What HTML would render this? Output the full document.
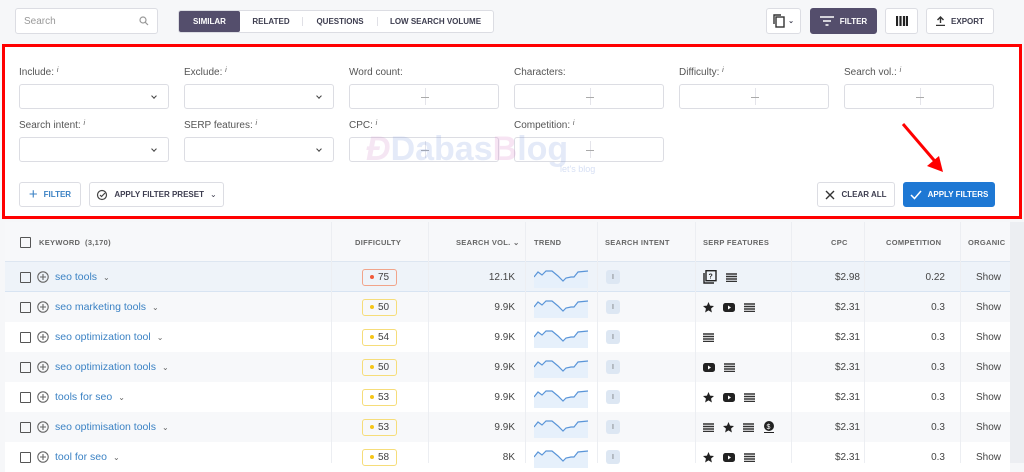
<!DOCTYPE html>
<html><head><style>
*{box-sizing:border-box;margin:0;padding:0}
body{width:1024px;height:463px;overflow:hidden;background:#f6f7f9;font-family:"Liberation Sans",sans-serif;position:relative;color:#333}
.a{position:absolute}
.btn{position:absolute;border:1px solid #dcdde3;border-radius:3px;background:#fff;font-size:8px;font-weight:bold;color:#3d3d4f;display:flex;align-items:center;justify-content:center;gap:6px}
.lbl{position:absolute;font-size:10px;color:#555}
.lbl i{font-size:7px;vertical-align:top}
.inp{position:absolute;width:150px;height:25px;border:1px solid #dcdde3;border-radius:3px;background:#fff}
.sel:after{content:"";position:absolute;right:12px;top:9px;width:3px;height:3px;border-right:1.2px solid #444;border-bottom:1.2px solid #444;transform:rotate(45deg)}
.rng:before{content:"";position:absolute;left:75px;top:3px;height:17px;border-left:1px solid #e4e4ea}
.rng:after{content:"";position:absolute;left:71px;top:12px;width:8px;border-top:1px solid #aaa}
.row{position:absolute;left:5px;width:1005px;height:30px;font-size:10px}
.c{position:absolute;top:0;height:30px;display:flex;align-items:center}
.cb{width:11px;height:11px;border:1.5px solid #555;border-radius:1px}
.kw{color:#3b82c4;font-size:10.5px}
.dif{width:35px;height:17px;border:1px solid #f6dd7a;border-radius:3px;font-size:10px;color:#444;display:flex;align-items:center;justify-content:center;gap:4px}
.dif b{width:4px;height:4px;border-radius:50%;background:#f5c518}
.it{width:14px;height:14px;background:#dde7f3;border-radius:3px;font-size:7px;color:#666;display:flex;align-items:center;justify-content:center}
.hd{position:absolute;top:0;height:40px;display:flex;align-items:center;font-size:7.5px;font-weight:bold;color:#666;letter-spacing:.3px}
.vl{position:absolute;top:222px;height:241px;border-left:1px solid #eceef2}
</style></head><body>
<div class="btn" style="left:15px;top:8px;width:143px;height:26px;justify-content:space-between;padding:0 8px;font-weight:normal;font-size:10px;color:#999">Search<svg width="10" height="10" viewBox="0 0 10 10"><circle cx="4" cy="4" r="3" fill="none" stroke="#999" stroke-width="1.2"/><path d="M6.3 6.3L9 9" stroke="#999" stroke-width="1.2"/></svg></div>
<div class="btn" style="left:178px;top:10px;width:316px;height:23px;justify-content:flex-start;gap:0">
<div style="width:61px;height:21px;background:#544e6c;color:#fff;display:flex;align-items:center;justify-content:center;border-radius:2px">SIMILAR</div>
<div style="width:63px;text-align:center;border-right:1px solid #e0e0e6">RELATED</div>
<div style="width:75px;text-align:center;border-right:1px solid #e0e0e6">QUESTIONS</div>
<div style="width:115px;text-align:center">LOW SEARCH VOLUME</div></div>
<div class="btn" style="left:766px;top:8px;width:35px;height:26px;gap:3px"><svg width="12" height="14" viewBox="0 0 12 14"><rect x="3" y="3" width="8" height="10" fill="none" stroke="#333" stroke-width="1.4"/><path d="M1 10V1h7" fill="none" stroke="#333" stroke-width="1.4"/></svg><span style="font-size:7px">⌄</span></div>
<div class="btn" style="left:810px;top:8px;width:67px;height:26px;background:#544e6c;color:#fff;border-color:#544e6c"><svg width="14" height="10"><path d="M0 1h14M3 5h8M5.5 9h3" stroke="#fff" stroke-width="1.6"/></svg>FILTER</div>
<div class="btn" style="left:885px;top:8px;width:33px;height:26px"><svg width="12" height="10"><path d="M1 0v10M4.5 0v10M8 0v10M11 0v10" stroke="#222" stroke-width="2.2"/></svg></div>
<div class="btn" style="left:926px;top:8px;width:68px;height:26px"><svg width="9" height="10"><path d="M4.5 7V1M1.5 4l3-3 3 3M0 9.5h9" fill="none" stroke="#333" stroke-width="1.4"/></svg>EXPORT</div>
<div class="a" style="left:2px;top:44px;width:1020px;height:175px;background:#fff;border:3px solid #f00"></div>
<div class="lbl" style="left:19px;top:67px">Include: <i>i</i></div>
<div class="lbl" style="left:184px;top:67px">Exclude: <i>i</i></div>
<div class="lbl" style="left:349px;top:67px">Word count:</div>
<div class="lbl" style="left:514px;top:67px">Characters:</div>
<div class="lbl" style="left:679px;top:67px">Difficulty: <i>i</i></div>
<div class="lbl" style="left:844px;top:67px">Search vol.: <i>i</i></div>
<div class="inp sel" style="left:19px;top:84px"></div>
<div class="inp sel" style="left:184px;top:84px"></div>
<div class="inp rng" style="left:349px;top:84px"></div>
<div class="inp rng" style="left:514px;top:84px"></div>
<div class="inp rng" style="left:679px;top:84px"></div>
<div class="inp rng" style="left:844px;top:84px"></div>
<div class="lbl" style="left:19px;top:120px">Search intent: <i>i</i></div>
<div class="lbl" style="left:184px;top:120px">SERP features: <i>i</i></div>
<div class="lbl" style="left:349px;top:120px">CPC: <i>i</i></div>
<div class="lbl" style="left:514px;top:120px">Competition: <i>i</i></div>
<div class="inp sel" style="left:19px;top:137px"></div>
<div class="inp sel" style="left:184px;top:137px"></div>
<div class="inp rng" style="left:349px;top:137px"></div>
<div class="inp rng" style="left:514px;top:137px"></div>
<div class="a" style="left:366px;top:130px;font-size:34px;font-weight:bold;color:rgba(210,140,200,.22);font-style:italic">Đ<span style="font-style:normal;color:rgba(120,150,220,.2)">Dabas</span><span style="font-style:normal;color:rgba(220,130,200,.22)">B</span><span style="font-style:normal;color:rgba(120,150,220,.2)">log</span></div>
<div class="a" style="left:560px;top:164px;font-size:9px;color:rgba(120,150,220,.3)">let's blog</div>
<div class="btn" style="left:19px;top:182px;width:62px;height:25px;color:#3b82c4"><span style="font-size:15px;font-weight:normal">+</span>FILTER</div>
<div class="btn" style="left:89px;top:182px;width:135px;height:25px"><svg width="12" height="12"><circle cx="6" cy="6" r="4.5" fill="none" stroke="#444" stroke-width="1.2"/><path d="M4 6l1.5 1.5L9 4" fill="none" stroke="#444" stroke-width="1.2"/></svg>APPLY FILTER PRESET<span style="font-weight:normal">⌄</span></div>
<div class="btn" style="left:817px;top:182px;width:78px;height:25px"><svg width="10" height="10"><path d="M1 1l8 8M9 1l-8 8" stroke="#333" stroke-width="1.4"/></svg>CLEAR ALL</div>
<div class="btn" style="left:903px;top:182px;width:92px;height:25px;background:#1e78d4;border-color:#1e78d4;color:#fff"><svg width="12" height="10"><path d="M1 5l3.5 3.5L11 1" fill="none" stroke="#fff" stroke-width="1.5"/></svg>APPLY FILTERS</div>
<svg class="a" style="left:895px;top:120px" width="60" height="60"><path d="M8 4L44 46" stroke="#f00" stroke-width="3"/><path d="M48 52L32 46 44 36z" fill="#f00"/></svg>
<div class="a" style="left:5px;top:222px;width:1005px;height:241px;background:#fff"></div>
<div class="a" style="left:1010px;top:222px;width:14px;height:241px;background:#eceef2"></div>
<div class="a" style="left:5px;top:222px;width:1005px;height:40px;background:#f7f8fa;border-bottom:1px solid #dde6f1"></div>
<div class="hd" style="left:20px;top:222px"><div class="cb" style="margin-right:8px"></div>KEYWORD &nbsp;(3,170)</div>
<div class="hd" style="left:355px;top:222px">DIFFICULTY</div>
<div class="hd" style="left:456px;top:222px">SEARCH VOL. ⌄</div>
<div class="hd" style="left:534px;top:222px">TREND</div>
<div class="hd" style="left:605px;top:222px">SEARCH INTENT</div>
<div class="hd" style="left:703px;top:222px">SERP FEATURES</div>
<div class="hd" style="left:831px;top:222px">CPC</div>
<div class="hd" style="left:886px;top:222px">COMPETITION</div>
<div class="hd" style="left:968px;top:222px">ORGANIC</div>
<div id="rows"></div>
<script>
const S={s:'<svg width="11" height="11" viewBox="0 0 10 10"><path d="M5 0l1.4 3.3 3.6.3-2.7 2.4.8 3.5L5 7.6 1.9 9.5l.8-3.5L0 3.6l3.6-.3z" fill="#222"/></svg>',
y:'<svg width="12" height="9"><rect width="12" height="9" rx="2.5" fill="#222"/><path d="M5 2.5v4l3-2z" fill="#fff"/></svg>',
l:'<svg width="11" height="9"><path d="M0 1h11M0 3.5h11M0 6h11M0 8.5h11" stroke="#333" stroke-width="1.4"/></svg>',
q:'<svg width="14" height="14"><rect x="3" y="0.7" width="10" height="10" fill="none" stroke="#222" stroke-width="1.4"/><path d="M1 3v10h10" fill="none" stroke="#222" stroke-width="1.4"/><text x="5.5" y="8.5" font-size="7" font-weight="bold" fill="#222">?</text></svg>',
d:'<svg width="12" height="12"><circle cx="6" cy="5" r="5" fill="#222"/><text x="3.5" y="8" font-size="7" fill="#fff">$</text><path d="M1 11.5h10" stroke="#222"/></svg>'};
const R=[["seo tools",75,"12.1K","q l","$2.98","0.22"],["seo marketing tools",50,"9.9K","s y l","$2.31","0.3"],["seo optimization tool",54,"9.9K","l","$2.31","0.3"],["seo optimization tools",50,"9.9K","y l","$2.31","0.3"],["tools for seo",53,"9.9K","s y l","$2.31","0.3"],["seo optimisation tools",53,"9.9K","l s l d","$2.31","0.3"],["tool for seo",58,"8K","s y l","$2.31","0.3"]];
let h='';
R.forEach((r,i)=>{const t=262+i*30;const bg=i==0?'#eef3f9':(i%2?'#f7f8fa':'#fff');
h+=`<div class="row" style="top:${t}px;background:${bg};${i==0?'border-bottom:1px solid #d8e4f2;':''}">
<div class="c" style="left:15px;gap:6px"><div class="cb"></div><svg width="12" height="12"><circle cx="6" cy="6" r="5.2" fill="none" stroke="#666" stroke-width="1.1"/><path d="M6 3v6M3 6h6" stroke="#666" stroke-width="1.1"/></svg><span class="kw">${r[0]}</span><span style="font-size:8px;color:#666">⌄</span></div>
<div class="c" style="left:357px"><div class="dif" style="${i==0?'border-color:#f1a48a;':''}"><b style="${i==0?'background:#f05a3a':''}"></b>${r[1]}</div></div>
<div class="c" style="left:420px;width:90px;justify-content:flex-end;color:#444">${r[2]}</div>
<div class="c" style="left:529px"><svg width="56" height="22"><path d="M0 11L4 6 8 9 12 5 18 5 24 10 29 15 32 12 37 11 40 11 44 6 54 5V22H0z" fill="#e6f0fb"/><path d="M0 11L4 6 8 9 12 5 18 5 24 10 29 15 32 12 37 11 40 11 44 6 54 5" fill="none" stroke="#5a95d8" stroke-width="1.2"/></svg></div>
<div class="c" style="left:601px"><div class="it">I</div></div>
<div class="c" style="left:698px;gap:9px">${r[3].split(' ').map(k=>S[k]).join('')}</div>
<div class="c" style="left:780px;width:75px;justify-content:flex-end;color:#444">${r[4]}</div>
<div class="c" style="left:860px;width:80px;justify-content:flex-end;color:#444">${r[5]}</div>
<div class="c" style="left:971px;color:#444">Show</div></div>`});
document.getElementById('rows').innerHTML=h;
</script>
<div class="vl" style="left:331px"></div><div class="vl" style="left:428px"></div><div class="vl" style="left:525px"></div><div class="vl" style="left:597px"></div><div class="vl" style="left:695px"></div><div class="vl" style="left:791px"></div><div class="vl" style="left:864px"></div><div class="vl" style="left:960px"></div>
</body></html>
